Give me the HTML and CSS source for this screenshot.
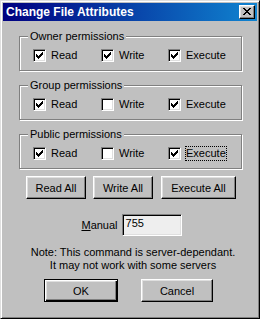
FILE: index.html
```html
<!DOCTYPE html>
<html>
<head>
<meta charset="utf-8">
<link rel="stylesheet" href="styles.css">
</head>
<body>
<div class="window">
  <div class="titlebar">
    <span class="title">Change File Attributes</span>
    <button class="close" type="button" aria-label="Close">
      <svg width="8" height="7" viewBox="0 0 8 7" shape-rendering="crispEdges"><path d="M0 0h2v1H0zM6 0h2v1H6zM1 1h2v1H1zM5 1h2v1H5zM2 2h4v1H2zM3 3h2v1H3zM2 4h4v1H2zM1 5h2v1H1zM5 5h2v1H5zM0 6h2v1H0zM6 6h2v1H6z" fill="#000"/></svg>
    </button>
  </div>
  <div class="content">
    <div class="group">
      <span class="legend">Owner permissions</span>
      <div class="row">
        <label class="cb"><span class="box"><svg width="13" height="13" viewBox="0 0 13 13" shape-rendering="crispEdges"><path class="tick" d="M3 5h1v3H3zM4 6h1v3H4zM5 7h1v3H5zM6 6h1v3H6zM7 5h1v3H7zM8 4h1v3H8zM9 3h1v3H9z"/></svg></span><span class="txt">Read</span></label>
        <label class="cb"><span class="box"><svg width="13" height="13" viewBox="0 0 13 13" shape-rendering="crispEdges"><path class="tick" d="M3 5h1v3H3zM4 6h1v3H4zM5 7h1v3H5zM6 6h1v3H6zM7 5h1v3H7zM8 4h1v3H8zM9 3h1v3H9z"/></svg></span><span class="txt">Write</span></label>
        <label class="cb"><span class="box"><svg width="13" height="13" viewBox="0 0 13 13" shape-rendering="crispEdges"><path class="tick" d="M3 5h1v3H3zM4 6h1v3H4zM5 7h1v3H5zM6 6h1v3H6zM7 5h1v3H7zM8 4h1v3H8zM9 3h1v3H9z"/></svg></span><span class="txt">Execute</span></label>
      </div>
    </div>
    <div class="group">
      <span class="legend">Group permissions</span>
      <div class="row">
        <label class="cb"><span class="box"><svg width="13" height="13" viewBox="0 0 13 13" shape-rendering="crispEdges"><path class="tick" d="M3 5h1v3H3zM4 6h1v3H4zM5 7h1v3H5zM6 6h1v3H6zM7 5h1v3H7zM8 4h1v3H8zM9 3h1v3H9z"/></svg></span><span class="txt">Read</span></label>
        <label class="cb"><span class="box"></span><span class="txt">Write</span></label>
        <label class="cb"><span class="box"><svg width="13" height="13" viewBox="0 0 13 13" shape-rendering="crispEdges"><path class="tick" d="M3 5h1v3H3zM4 6h1v3H4zM5 7h1v3H5zM6 6h1v3H6zM7 5h1v3H7zM8 4h1v3H8zM9 3h1v3H9z"/></svg></span><span class="txt">Execute</span></label>
      </div>
    </div>
    <div class="group">
      <span class="legend">Public permissions</span>
      <div class="row">
        <label class="cb"><span class="box"><svg width="13" height="13" viewBox="0 0 13 13" shape-rendering="crispEdges"><path class="tick" d="M3 5h1v3H3zM4 6h1v3H4zM5 7h1v3H5zM6 6h1v3H6zM7 5h1v3H7zM8 4h1v3H8zM9 3h1v3H9z"/></svg></span><span class="txt">Read</span></label>
        <label class="cb"><span class="box"></span><span class="txt">Write</span></label>
        <label class="cb"><span class="box"><svg width="13" height="13" viewBox="0 0 13 13" shape-rendering="crispEdges"><path class="tick" d="M3 5h1v3H3zM4 6h1v3H4zM5 7h1v3H5zM6 6h1v3H6zM7 5h1v3H7zM8 4h1v3H8zM9 3h1v3H9z"/></svg></span><span class="txt focus">Execute</span></label>
      </div>
    </div>
    <div class="btnrow">
      <button class="btn w60" type="button">Read All</button>
      <button class="btn w60" type="button">Write All</button>
      <button class="btn w75" type="button">Execute All</button>
    </div>
    <div class="manual">
      <span class="mlabel"><u>M</u>anual</span>
      <span class="field">755</span>
    </div>
    <div class="note">Note: This command is server-dependant.<br>It may not work with some servers</div>
    <div class="okrow">
      <button class="btn default ok" type="button"><span>OK</span></button>
      <button class="btn cancel" type="button">Cancel</button>
    </div>
  </div>
</div>
</body>
</html>
```

FILE: styles.css
```css
html, body {
  margin: 0;
  padding: 0;
  background: #c0c0c0;
}
.window {
  width: 260px;
  height: 319px;
  box-sizing: border-box;
  background: #c0c0c0;
  border: 1px solid;
  border-color: #dfdfdf #000 #000 #dfdfdf;
  box-shadow: inset 1px 1px #fff, inset -1px -1px #808080;
  padding: 2px;
  font-family: "Liberation Sans", Arial, sans-serif;
  font-size: 11px;
  color: #000;
}
.titlebar {
  height: 18px;
  background: linear-gradient(to right, #000080, #1084d0);
  display: flex;
  align-items: center;
  justify-content: space-between;
  padding: 0 2px 0 3px;
}
.title {
  color: #fff;
  font-weight: bold;
  font-size: 12px;
  line-height: 18px;
}
.close {
  width: 16px;
  height: 14px;
  box-sizing: border-box;
  padding: 0;
  margin: 0;
  background: #c0c0c0;
  border: 1px solid;
  border-color: #fff #000 #000 #fff;
  box-shadow: inset -1px -1px #808080, inset 1px 1px #dfdfdf;
  display: flex;
  align-items: center;
  justify-content: center;
}
.close svg { display: block; margin: 0 0 1px 0; }
.content {
  display: flex;
  flex-direction: column;
  padding-top: 15px;
}
.group {
  margin-left: 16px;
  width: 223px;
  height: 35px;
  box-sizing: border-box;
  border: 1px solid #808080;
  box-shadow: inset 1px 1px #fff, 1px 1px #fff;
  display: flex;
  flex-direction: column;
  margin-bottom: 14px;
}
.group:nth-child(3) { margin-bottom: 0; }
.legend {
  align-self: flex-start;
  background: #c0c0c0;
  line-height: 13px;
  padding: 0 2px;
  margin: -7px 0 0 8px;
}
.row {
  display: grid;
  grid-template-columns: 68px 67px auto;
  padding-left: 13px;
  margin-top: 6px;
}
.cb {
  display: flex;
  align-items: center;
  height: 13px;
}
.box {
  width: 13px;
  height: 13px;
  box-sizing: border-box;
  background: #fff;
  border: 1px solid;
  border-color: #808080 #fff #fff #808080;
  box-shadow: inset 1px 1px #000, inset -1px -1px #dfdfdf;
  position: relative;
  flex: none;
}
.box svg {
  display: block;
  margin: -1px 0 0 -1px;
}
.tick { fill: #000; }
.txt {
  margin-left: 5px;
  line-height: 13px;
}
.txt.focus {
  outline: 1px dotted #000;
  outline-offset: 0;
}
.btnrow {
  display: flex;
  margin: 7px 0 0 23px;
  gap: 7px;
}
.btnrow .w75 { margin-left: 1px; }
.btn {
  height: 23px;
  box-sizing: border-box;
  padding: 0;
  margin: 0;
  background: #c0c0c0;
  border: 1px solid;
  border-color: #fff #000 #000 #fff;
  box-shadow: inset -1px -1px #808080, inset 1px 1px #dfdfdf;
  font-family: "Liberation Sans", Arial, sans-serif;
  font-size: 11px;
  color: #000;
}
.w60 { width: 60px; }
.w75 { width: 75px; }
.manual {
  display: flex;
  align-items: center;
  justify-content: center;
  margin-top: 15px;
  padding-left: 3px;
  gap: 4px;
}
.field {
  width: 60px;
  height: 22px;
  box-sizing: border-box;
  background: #eeeeee;
  border: 1px solid;
  border-color: #808080 #fff #fff #808080;
  box-shadow: inset 1px 1px #000, inset -1px -1px #dfdfdf;
  padding: 2px 0 0 3px;
  line-height: 13px;
}
.note {
  text-align: center;
  line-height: 13px;
  margin-top: 10px;
  padding-left: 6px;
}
.okrow {
  display: flex;
  margin: 7px 0 0 41px;
  gap: 23px;
}
.ok {
  width: 74px;
}
.btn.default {
  border: 1px solid #000;
  box-shadow: inset 1px 1px #fff, inset -1px -1px #000, inset -2px -2px #808080, inset 2px 2px #dfdfdf;
}
.cancel { width: 72px; }
```
